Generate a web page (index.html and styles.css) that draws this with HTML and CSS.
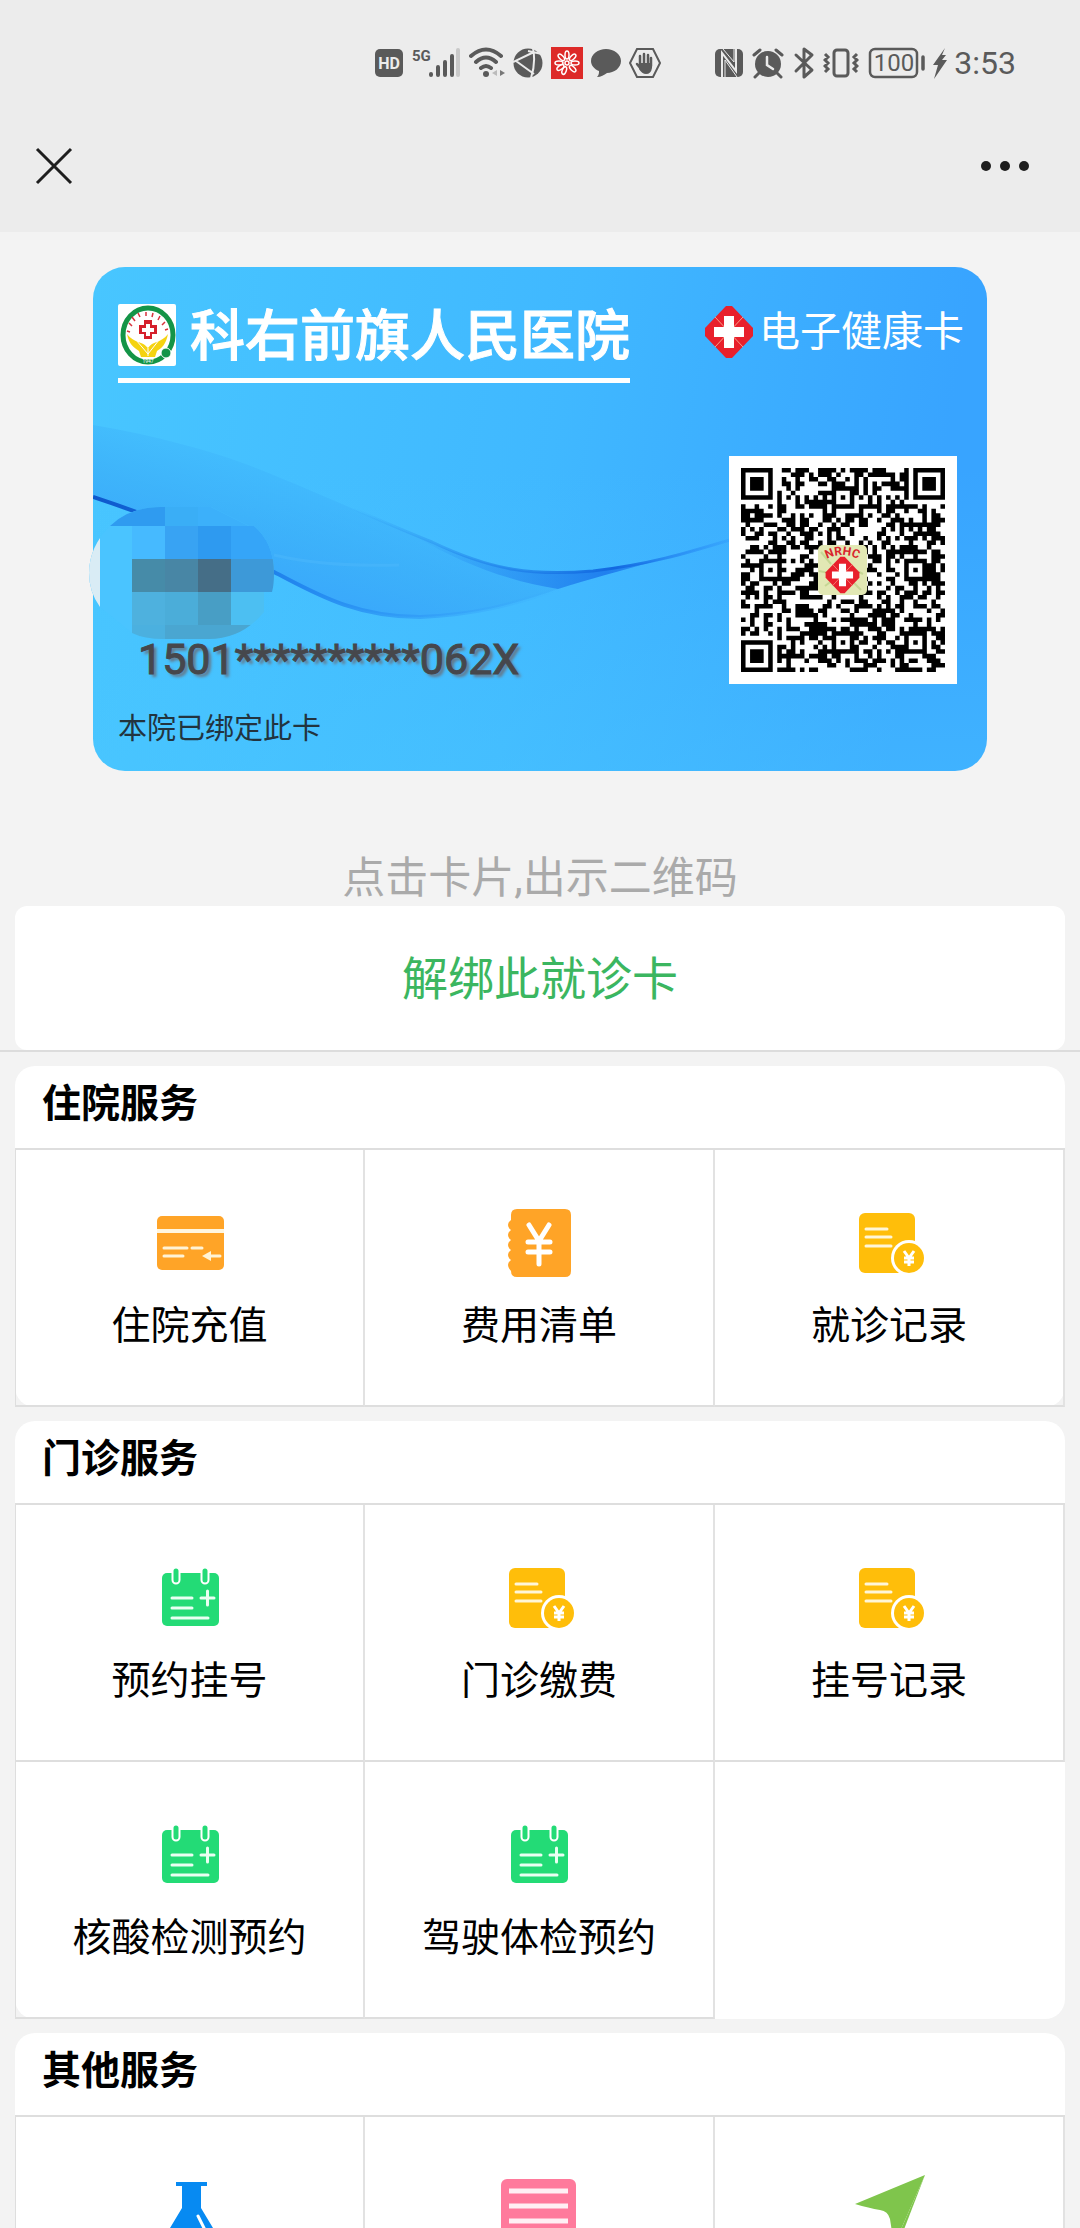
FILE: index.html
```html
<!DOCTYPE html>
<html lang="zh-CN">
  <head>
    <meta charset="UTF-8" />
    <meta name="viewport" content="width=device-width, initial-scale=1.0" />
    <title>电子健康卡</title>
    <link rel="stylesheet" href="styles.css">
  </head>
  <body>
    <!-- icons used more than once -->
    <svg class="sprite" aria-hidden="true">
      <symbol id="icon-record" viewBox="0 0 70 70">
        <rect x="5" y="5" width="56" height="60" rx="6" fill="#ffbe0a" />
        <path d="M12 21h21M12 29h25M12 38h25" stroke="#fff6d8" stroke-width="3" stroke-linecap="round" />
        <circle cx="55" cy="50" r="18" fill="#fff" />
        <circle cx="55" cy="50" r="15" fill="#ffbe0a" />
        <path d="M50 43l5 7 5-7M50 50h10M50 54h10M55 50v8" fill="none" stroke="#fff" stroke-width="3" />
      </symbol>
      <symbol id="icon-calendar" viewBox="0 0 70 70">
        <rect x="7" y="10" width="57" height="53" rx="5" fill="#23db76" />
        <path d="M21 9v8M50 9v8" stroke="#fff" stroke-width="9" stroke-linecap="round" />
        <path d="M21 8v9M50 8v9" stroke="#23db76" stroke-width="5" stroke-linecap="round" />
        <path d="M17 35h20M17 45h20M17 55h36M46 35h13M52.500 28v14" stroke="#e9fff2" stroke-width="3" stroke-linecap="round" />
      </symbol>
      <symbol id="icon-cross" viewBox="0 0 50 54">
        <path d="M22 1h6l21 22v8L28 53h-6L1 31v-8z" fill="#e8202c" />
        <path d="M11 12l28 30M39 12L11 42" stroke="#f7a08a" stroke-width="1" />
        <path d="M20 11h10v11h10v10H30v11H20V32H10V22h10z" fill="#fff" />
      </symbol>
    </svg>

    <div class="app">
      <header class="top">
        <div class="status">
          <div class="status-group">
            <svg width="28" height="34" viewBox="0 0 28 34">
              <rect y="3" width="28" height="28" rx="5" fill="#5a5a5a" />
              <text x="14" y="23" class="hd">HD</text>
            </svg>
            <svg width="50" height="34" viewBox="0 0 50 34">
              <text x="1" y="15" class="net">5G</text>
              <path d="M20 28v1M27 21v8M34 16v13M41 10v19" stroke="#5a5a5a" stroke-width="4" stroke-linecap="round" />
              <path d="M47 4v25" stroke="#c9c9c9" stroke-width="4" stroke-linecap="round" />
            </svg>
            <svg width="36" height="34" viewBox="0 0 36 34">
              <path d="M2 10q15-13 30 0M7 16q10-9 20 0M12 22q5-4 10 0" fill="none" stroke="#5a5a5a" stroke-width="4" stroke-linecap="round" />
              <circle cx="17" cy="28" r="3" fill="#5a5a5a" />
              <path d="M28 24v6l-5-3z" fill="#bbb" />
              <path d="M31 24v6l5-3z" fill="#777" />
            </svg>
            <svg width="30" height="34" viewBox="0 0 30 34">
              <circle cx="15" cy="17" r="14.500" fill="#5a5a5a" />
              <path d="M0 16L21 6M3 15l18 13M20 2q3 15-2 30M15 5l14 3" fill="none" stroke="#ebebeb" stroke-width="2" />
            </svg>
            <svg width="32" height="34" viewBox="0 0 32 34">
              <rect y="1" width="32" height="32" fill="#dd2a28" />
              <g fill="none" stroke="#fff" stroke-width="1.500">
                <ellipse cx="16" cy="9" rx="2" ry="4" />
                <ellipse cx="16" cy="9" rx="2" ry="4" transform="rotate(45 16 17)" />
                <ellipse cx="16" cy="9" rx="2" ry="4" transform="rotate(90 16 17)" />
                <ellipse cx="16" cy="9" rx="2" ry="4" transform="rotate(135 16 17)" />
                <ellipse cx="16" cy="9" rx="2" ry="4" transform="rotate(200 16 17)" />
                <ellipse cx="16" cy="9" rx="2" ry="4" transform="rotate(235 16 17)" />
                <ellipse cx="16" cy="9" rx="2" ry="4" transform="rotate(270 16 17)" />
                <ellipse cx="16" cy="9" rx="2" ry="4" transform="rotate(315 16 17)" />
                <circle cx="16" cy="17" r="2" />
              </g>
            </svg>
            <svg width="30" height="34" viewBox="0 0 30 34">
              <path d="M15 3c8 0 15 5 15 12s-7 12-14 12c-3 2-6 4-10 4 2-2 2-4 2-6-5-2-8-6-8-10C0 8 7 3 15 3z" fill="#5a5a5a" />
            </svg>
            <svg width="32" height="34" viewBox="0 0 32 34">
              <path d="M8 3h16l7 14-7 14H8L1 17z" fill="none" stroke="#5a5a5a" stroke-width="2" />
              <path d="M11 10v9M15 8v10M19 9v10M22 12v8M8 18l4 5" stroke="#5a5a5a" stroke-width="2.500" stroke-linecap="round" />
              <path d="M10 17h13v5q-1 6-6 6-4 0-7-5z" fill="#5a5a5a" />
            </svg>
          </div>
          <div class="status-group status-right">
            <svg width="29" height="34" viewBox="0 0 29 34">
              <rect y="3" width="28" height="28" rx="5" fill="#5a5a5a" />
              <path d="M7 31V7l14 18V3" fill="none" stroke="#ebebeb" stroke-width="2" />
              <path d="M10 31V14l12 17M19 3v13L8 3" fill="none" stroke="#ebebeb" stroke-width="1" />
            </svg>
            <svg width="34" height="34" viewBox="0 0 34 34">
              <circle cx="17" cy="18" r="13" fill="#5a5a5a" />
              <path d="M3 9l6-5M31 9l-6-5M8 27l-4 4M26 27l4 4" stroke="#5a5a5a" stroke-width="3" stroke-linecap="round" />
              <path d="M16 11v8l6 4" fill="none" stroke="#ebebeb" stroke-width="2.500" stroke-linecap="round" />
            </svg>
            <svg width="24" height="34" viewBox="0 0 24 34">
              <path d="M4 9l16 15-8 7V3l8 6L4 25" fill="none" stroke="#5a5a5a" stroke-width="3" stroke-linejoin="round" stroke-linecap="round" />
            </svg>
            <svg width="36" height="34" viewBox="0 0 36 34">
              <rect x="11" y="4" width="14" height="26" rx="3" fill="none" stroke="#5a5a5a" stroke-width="3" />
              <path d="M2 8l3 3-3 3 3 3-3 3 3 3-3 3M34 8l-3 3 3 3-3 3 3 3-3 3 3 3" fill="none" stroke="#5a5a5a" stroke-width="3" />
            </svg>
            <svg width="60" height="34" viewBox="0 0 60 34">
              <rect x="4" y="3" width="47" height="28" rx="5" fill="none" stroke="#5a5a5a" stroke-width="2.500" />
              <text x="28" y="25" class="battery">100</text>
              <path d="M57 11v12" stroke="#5a5a5a" stroke-width="3.500" stroke-linecap="round" />
            </svg>
            <svg width="14" height="34" viewBox="0 0 14 34">
              <path d="M12 2L0 19h5L1 33l13-19H9l4-5H9z" fill="#5a5a5a" />
            </svg>
            <span class="time">3:53</span>
          </div>
        </div>
        <div class="nav">
          <button class="nav-btn" aria-label="关闭">
            <svg width="40" height="40" viewBox="0 0 40 40">
              <path d="M3 3l34 34M37 3L3 37" stroke="#1e1e1e" stroke-width="3" />
            </svg>
          </button>
          <button class="nav-btn" aria-label="更多">
            <svg width="50" height="40" viewBox="0 0 50 40" fill="#1e1e1e">
              <circle cx="6" cy="20" r="5" />
              <circle cx="25" cy="20" r="5" />
              <circle cx="44" cy="20" r="5" />
            </svg>
          </button>
        </div>
      </header>

      <main class="content">
        <a href="#" class="card">
          <svg class="card-bg" viewBox="0 0 894 504" preserveAspectRatio="none" aria-hidden="true">
            <defs>
              <linearGradient id="ribbon" gradientUnits="userSpaceOnUse" x1="180" y1="170" x2="130" y2="330">
                <stop offset="0" stop-color="#38a8f8" stop-opacity="0" />
                <stop offset="0.500" stop-color="#38a9f7" stop-opacity="0.600" />
                <stop offset="1" stop-color="#38a4fd" />
              </linearGradient>
              <linearGradient id="edge" x1="0" y1="0" x2="1" y2="0">
                <stop offset="0.200" stop-color="#1d7de8" stop-opacity="0" />
                <stop offset="0.550" stop-color="#1d7de8" stop-opacity="0.700" />
                <stop offset="0.750" stop-color="#1268e0" />
                <stop offset="1" stop-color="#2c92fb" stop-opacity="0.300" />
              </linearGradient>
              <linearGradient id="edge-low" x1="0" y1="0" x2="1" y2="0">
                <stop offset="0" stop-color="#0d57cc" />
                <stop offset="0.450" stop-color="#2389f0" />
                <stop offset="1" stop-color="#37a3fb" stop-opacity="0" />
              </linearGradient>
              <linearGradient id="fold" x1="0" y1="0" x2="1" y2="0">
                <stop offset="0" stop-color="#2387f0" stop-opacity="0" />
                <stop offset="0.600" stop-color="#2080ee" />
                <stop offset="1" stop-color="#2f97fb" stop-opacity="0.500" />
              </linearGradient>
            </defs>
            <path d="M0 158C60 168 120 184 163 201 240 232 300 260 339 275 400 304 440 309 500 304 560 297 600 284 640 272 580 290 530 302 468 321 420 338 380 348 327 350 260 350 220 325 181 305 120 272 60 250 0 230z" fill="url(#ribbon)" />
            <path d="M320 268C400 304 440 309 500 304 560 297 600 284 640 272 580 290 530 302 465 322 420 315 370 298 320 268z" fill="url(#fold)" />
            <path d="M163 201C240 232 300 260 339 275 400 304 440 309 500 304 560 297 600 284 640 272" fill="none" stroke="url(#edge)" stroke-width="3" />
            <path d="M0 230C60 250 120 272 181 305 220 325 260 350 327 350 380 348 420 338 468 321" fill="none" stroke="url(#edge-low)" stroke-width="4" />
            <path d="M181 288q50 12 125 10" fill="none" stroke="#4bb8fb" stroke-width="3" stroke-opacity="0.500" />
          </svg>
          <div class="card-head">
            <div class="hospital">
              <svg width="58" height="62" viewBox="0 0 58 62" aria-hidden="true">
                <rect width="58" height="62" rx="2" fill="#fff" />
                <ellipse cx="30" cy="31" rx="25" ry="27" fill="none" stroke="#149447" stroke-width="5" />
                <circle cx="48" cy="49" r="5" fill="#149447" stroke="#fff" stroke-width="1" />
                <path d="M14 22l-3-3M17 17l-3-4M22 13l-2-4M28 12v-4M34 13l1-4M40 16l2-4M44 21l3-3M47 26l3-1M12 28l-3-1" stroke="#d8323c" stroke-width="1.500" />
                <path d="M9 30c8 10 14 6 21 14 6-8 12-4 20-14-2 10-6 14-11 17l-2 6H23l-2-6C15 43 11 40 9 30z" fill="#f5d311" />
                <path d="M18 36l12 14 11-14M30 44v8" fill="none" stroke="#fff" stroke-width="1" />
                <path d="M26 16h8v5h5v9h-5v5h-8v-5h-5v-9h5z" fill="#d5202c" />
                <path d="M28 20h4v4h4v4h-4v4h-4v-4h-4v-4h4z" fill="#fff" />
                <text x="30" y="59" class="year">1947</text>
              </svg>
              <h1 class="hospital-name">科右前旗人民医院</h1>
            </div>
            <div class="brand">
              <svg width="50" height="54" aria-hidden="true"><use href="#icon-cross" /></svg>
              <span>电子健康卡</span>
            </div>
          </div>
          <div class="card-body">
            <p class="card-number">1501**********062X</p>
            <svg class="qr" width="228" height="228" viewBox="0 0 228 228" aria-hidden="true">
              <rect width="228" height="228" fill="#fff" />
              <path id="qr-modules" transform="translate(12 12) scale(4.533)" fill="#000" />
              <rect x="89" y="89" width="49" height="50" rx="5" fill="#e2e8b4" />
              <path d="M92 96l10 12M96 130l8-6M134 118l-8-4M132 134l-8-8M90 115l10 2" stroke="#c6d795" stroke-width="2" />
              <path id="arc" d="M93 106q20-14 41 0" fill="none" />
              <text class="nrhc"><textPath href="#arc" startOffset="50%">NRHC</textPath></text>
              <svg x="94" y="100" width="39" height="38"><use href="#icon-cross" width="39" height="38" /></svg>
            </svg>
          </div>
          <p class="card-note">本院已绑定此卡</p>
          <!-- pixelated name and photo -->
          <svg class="mosaic" width="185" height="132" viewBox="0 0 185 132" aria-hidden="true">
            <defs>
              <clipPath id="blob">
                <path d="M0 66Q0 40 21 19 40 0 72 0h50L160 19h5Q185 36 185 66q0 12-2 19l-8 0v20q-22 27-55 27H75Q55 132 43 126L11 100Q0 85 0 66z" />
              </clipPath>
            </defs>
            <g clip-path="url(#blob)">
              <rect width="185" height="132" fill="#4ac4ff" />
              <rect y="30" width="11" height="72" fill="#d9ecf5" />
              <rect x="11" width="65" height="19" fill="#2f9bf0" />
              <rect x="76" width="33" height="19" fill="#3aaef6" />
              <rect x="109" width="76" height="19" fill="#3cb0fa" />
              <rect x="43" y="19" width="33" height="33" fill="#46baff" />
              <rect x="76" y="19" width="33" height="33" fill="#38a3f3" />
              <rect x="109" y="19" width="33" height="33" fill="#2e9af0" />
              <rect x="142" y="19" width="43" height="33" fill="#35a5f8" />
              <rect x="43" y="52" width="33" height="33" fill="#468ba8" />
              <rect x="76" y="52" width="33" height="33" fill="#4886a5" />
              <rect x="109" y="52" width="33" height="33" fill="#456e87" />
              <rect x="142" y="52" width="43" height="33" fill="#3d99d8" />
              <rect x="43" y="85" width="33" height="33" fill="#4eb1de" />
              <rect x="76" y="85" width="33" height="33" fill="#4badd9" />
              <rect x="109" y="85" width="33" height="33" fill="#489ec5" />
              <rect x="142" y="85" width="43" height="33" fill="#4cbff2" />
              <rect x="43" y="118" width="33" height="14" fill="#4bb0df" />
              <rect x="76" y="118" width="100" height="14" fill="#4aa6d1" />
            </g>
          </svg>
        </a>
        <p class="hint">点击卡片,出示二维码</p>

        <div class="unbind">
          <button class="unbind-btn">解绑此就诊卡</button>
        </div>

        <section class="section">
          <h2 class="section-title">住院服务</h2>
          <div class="grid">
            <a href="#" class="item">
              <svg class="icon" viewBox="0 0 70 70">
                <rect x="2" y="8" width="67" height="54" rx="5" fill="#ffa427" />
                <path d="M2 23h67" stroke="#fff6e0" stroke-width="4" />
                <path d="M9 40h23M37 40h10M9 48h19M54 48h11" stroke="#fff3d6" stroke-width="3" stroke-linecap="round" />
                <path d="M56 43v10l-9-5z" fill="#fff3d6" />
              </svg>
              <span>住院充值</span>
            </a>
            <a href="#" class="item">
              <svg class="icon" viewBox="0 0 70 70">
                <path d="M13 1h48q6 0 6 6v56q0 6-6 6H13q-6 0-6-6-3-3-3-6t3-5q-3-2-3-5t3-5q-3-2-3-5t3-5q-3-2-3-5t3-5q-3-2-3-5t3-5V7q0-6 6-6z" fill="#ffa427" />
                <path d="M25 17l10 16 10-16M24 34h22M24 44h22M35 34v22" fill="none" stroke="#fff" stroke-width="5" stroke-linecap="round" />
              </svg>
              <span>费用清单</span>
            </a>
            <a href="#" class="item">
              <svg class="icon"><use href="#icon-record" /></svg>
              <span>就诊记录</span>
            </a>
          </div>
        </section>

        <section class="section">
          <h2 class="section-title">门诊服务</h2>
          <div class="grid">
            <a href="#" class="item">
              <svg class="icon"><use href="#icon-calendar" /></svg>
              <span>预约挂号</span>
            </a>
            <a href="#" class="item">
              <svg class="icon"><use href="#icon-record" /></svg>
              <span>门诊缴费</span>
            </a>
            <a href="#" class="item">
              <svg class="icon"><use href="#icon-record" /></svg>
              <span>挂号记录</span>
            </a>
            <a href="#" class="item">
              <svg class="icon"><use href="#icon-calendar" /></svg>
              <span>核酸检测预约</span>
            </a>
            <a href="#" class="item">
              <svg class="icon"><use href="#icon-calendar" /></svg>
              <span>驾驶体检预约</span>
            </a>
          </div>
        </section>

        <section class="section">
          <h2 class="section-title">其他服务</h2>
          <div class="grid">
            <a href="#" class="item">
              <svg class="icon" viewBox="0 0 70 70">
                <path d="M21 7h31v4h-6v22l18 30q2 6-5 6H14q-7 0-5-6l18-30V11h-6z" fill="#078af2" />
                <path d="M43 41l9 18" stroke="#fff" stroke-width="3" stroke-linecap="round" />
              </svg>
            </a>
            <a href="#" class="item">
              <svg class="icon" viewBox="0 0 70 70">
                <rect x="-3" y="4" width="75" height="66" rx="6" fill="#ff7a9c" />
                <path d="M5 16h59M5 31h59M5 46h59" stroke="#fff0f4" stroke-width="5" />
              </svg>
            </a>
            <a href="#" class="item">
              <svg class="icon" viewBox="0 0 70 70">
                <path d="M71 0L1 29q14 4 25 6 8 1 10 9l4 26z" fill="#7fc54c" />
                <path d="M71 0L40 70h4z" fill="#7fc54c" />
              </svg>
            </a>
          </div>
        </section>
      </main>
    </div>
    <script src="script.js"></script>
  </body>
</html>
```

FILE: styles.css
```css
* {
  box-sizing: border-box;
}
body {
  margin: 0;
  background-color: #f3f3f3;
  color: #000;
  font-family: Roboto, "Noto Sans CJK SC", sans-serif;
}
h1,
h2,
p {
  margin: 0;
}
a {
  color: inherit;
  text-decoration: none;
}
button {
  padding: 0;
  border: 0;
  background: none;
  font-family: inherit;
  cursor: pointer;
}
svg {
  display: block;
  flex-shrink: 0;
}
.sprite {
  position: absolute;
  width: 0;
  height: 0;
}
.app {
  display: flex;
  flex-direction: column;
  height: 100vh;
}

/* status bar and navigation */
.top {
  background-color: #ececec;
}
.status {
  display: flex;
  justify-content: flex-end;
  gap: 54px;
  padding: 45px 64px 0;
}
.status-group {
  display: flex;
  align-items: center;
  gap: 8px;
}
.status-right {
  gap: 7px;
}
.hd {
  fill: #ececec;
  font-size: 16px;
  font-weight: 700;
  text-anchor: middle;
}
.net {
  fill: #5a5a5a;
  font-size: 15px;
  font-weight: 700;
}
.battery {
  fill: #5a5a5a;
  font-size: 24px;
  text-anchor: middle;
}
.time {
  color: #5a5a5a;
  font-size: 32px;
  line-height: 36px;
}
.nav {
  display: flex;
  justify-content: space-between;
  align-items: center;
  height: 151px;
  padding: 19px 50px 0 34px;
}
.nav-btn {
  display: flex;
}

/* page */
.content {
  flex: 1;
  min-height: 0;
  padding-top: 35px;
  overflow-y: auto;
  scrollbar-width: none;
}
.card {
  position: relative;
  display: block;
  margin: 0 93px;
  padding: 37px 23px 22px 25px;
  border-radius: 32px;
  background: linear-gradient(rgba(75, 200, 255, 0) 40%, rgba(75, 200, 255, 0.4)),
    linear-gradient(100deg, #48c6ff 0%, #40b8ff 50%, #38a4ff 90%);
}
.card-bg {
  position: absolute;
  top: 0;
  left: 0;
  width: 100%;
  height: 100%;
}
.card-head,
.card-body,
.card-note {
  position: relative;
  z-index: 1;
}
.card-head {
  display: flex;
  justify-content: space-between;
  align-items: flex-start;
}
.hospital {
  display: flex;
  align-items: center;
  gap: 14px;
  padding-bottom: 12px;
  border-bottom: 5px solid #fff;
  color: #fff;
}
.hospital-name {
  padding-top: 2px;
  font-size: 55px;
  font-weight: 500;
  line-height: 60px;
  -webkit-text-stroke: 1px #fff;
}
.year {
  fill: #fff;
  font-size: 5px;
  text-anchor: middle;
}
.brand {
  display: flex;
  align-items: center;
  gap: 5px;
  color: #fff;
  font-size: 41px;
  line-height: 56px;
}
.card-body {
  display: flex;
  justify-content: space-between;
  align-items: flex-end;
  padding: 73px 7px 0 20px;
}
.card-number {
  color: #46474c;
  font-size: 43px;
  line-height: 50px;
  text-shadow: 3px 3px 3px #66788a;
  -webkit-text-stroke: 1px #46474c;
}
.nrhc {
  fill: #d9252c;
  font-size: 12px;
  font-weight: 700;
  text-anchor: middle;
}
.card-note {
  padding-top: 25px;
  color: #22343f;
  font-size: 29px;
  line-height: 40px;
}
.mosaic {
  position: absolute;
  top: 240px;
  left: -4px;
}
.hint {
  padding-top: 79px;
  color: #aaa;
  font-size: 43px;
  line-height: 56px;
  text-align: center;
}
.unbind {
  padding: 0 15px;
  border-bottom: 2px solid #dcdcdc;
}
.unbind-btn {
  width: 100%;
  height: 144px;
  padding-bottom: 6px;
  border-radius: 12px;
  background-color: #fff;
  color: #3bb660;
  font-size: 46px;
}

/* services */
.section {
  margin: 14px 15px 0;
  border-radius: 20px;
  background-color: #fff;
}
.section-title {
  padding: 8px 27px 14px;
  font-size: 39px;
  font-weight: 700;
  line-height: 60px;
}
.grid {
  display: grid;
  grid-template-columns: repeat(3, 1fr);
  border-top: 2px solid #dedede;
}
.item {
  display: flex;
  flex-direction: column;
  align-items: center;
  gap: 18px;
  height: 257px;
  padding-top: 58px;
  border-right: 2px solid #e2e2e2;
  border-bottom: 2px solid #dedede;
  font-size: 39px;
  line-height: 60px;
}
.item:nth-child(3n + 1) {
  border-left: 1px solid #dedede;
}
.icon {
  width: 70px;
  height: 70px;
  overflow: visible;
}
```

FILE: script.js
```js
// draws the 45x45 code: finder, alignment and timing patterns, then the data modules
const size = 45;
const modules = [];
let seed = 20471;

function random() {
  seed = (seed * 1103515245 + 12345) % 2147483648;
  return seed / 2147483648;
}

for (let y = 0; y < size; y++) {
  modules.push([]);
  for (let x = 0; x < size; x++) {
    modules[y].push(random() < 0.5);
  }
}

// - rings of a square pattern around its centre
function drawSquare(cx, cy, radius, isDark) {
  for (let y = -radius; y <= radius; y++) {
    for (let x = -radius; x <= radius; x++) {
      const row = modules[cy + y];
      if (row && cx + x >= 0 && cx + x < size) {
        row[cx + x] = isDark(Math.max(Math.abs(x), Math.abs(y)));
      }
    }
  }
}

for (let i = 8; i < size - 8; i++) {
  modules[6][i] = i % 2 === 0;
  modules[i][6] = i % 2 === 0;
}

[[3, 3], [41, 3], [3, 41]].forEach(([x, y]) => {
  drawSquare(x, y, 4, (d) => d < 2 || d === 3);
});

[[22, 6], [6, 22], [38, 22], [22, 38], [38, 38]].forEach(([x, y]) => {
  drawSquare(x, y, 2, (d) => d !== 1);
});

// - one rectangle per run of dark modules in a row
let path = "";
modules.forEach((row, y) => {
  let x = 0;
  while (x < size) {
    let run = 0;
    while (row[x + run]) run++;
    if (run) path += `M${x} ${y}h${run}v1h-${run}z`;
    x += run + 1;
  }
});
document.getElementById("qr-modules").setAttribute("d", path);
```
